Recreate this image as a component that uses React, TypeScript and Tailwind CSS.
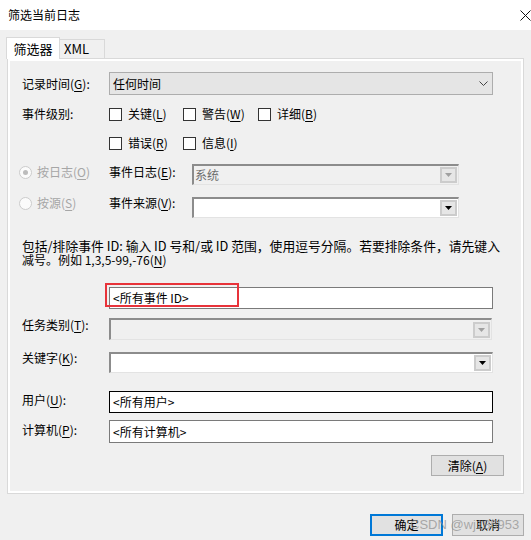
import React from 'react';

const font = { fontFamily: '"Noto Sans CJK SC", "Noto Sans", sans-serif' };

function Key({ children }: { children: React.ReactNode }) {
  return <span className="underline decoration-1 underline-offset-[2px]">{children}</span>;
}

function Checkbox({ label, k }: { label: string; k: string }) {
  return (
    <div className="flex items-center gap-[6px]">
      <span className="w-[13px] h-[13px] border border-[#333333] bg-white" />
      <span>
        {label}(<Key>{k}</Key>)
      </span>
    </div>
  );
}

function Radio({ label, k, checked }: { label: string; k: string; checked?: boolean }) {
  return (
    <div className="flex items-center gap-[5px] w-[99px] pl-[9px] leading-[16px] text-[#a6a6a6]">
      <span className="w-[13px] h-[13px] rounded-full border border-[#cccccc] bg-[#fbfbfb] flex items-center justify-center">
        {checked && <span className="w-[5px] h-[5px] rounded-full bg-[#bcbcbc]" />}
      </span>
      <span>
        {label}(<Key>{k}</Key>)
      </span>
    </div>
  );
}

function Arrow({ disabled }: { disabled?: boolean }) {
  return (
    <svg width="7" height="4" viewBox="0 0 7 4">
      <path d="M0 0 H7 L3.5 4 Z" fill={disabled ? '#a0a0a0' : '#000000'} />
    </svg>
  );
}

function ClassicCombo({ width, text, disabled }: { width: string; text?: string; disabled?: boolean }) {
  return (
    <div
      className={`${width} h-[21px] border-t-2 border-l-2 border-t-[#8c8c8c] border-l-[#8c8c8c] border-r border-b border-r-[#e3e3e3] border-b-[#e3e3e3] flex items-center ${
        disabled ? 'bg-[#f0f0f0]' : 'bg-white'
      }`}
    >
      <span className="flex-1 pl-[1px] text-[#6d6d6d] leading-[16px]">{text}</span>
      <div className="w-[17px] h-[16px] mr-[1px] border-2 border-[#cccccc] bg-[#e6e6e6] flex items-center justify-center">
        <Arrow disabled={disabled} />
      </div>
    </div>
  );
}

function TextBox({ text, dark }: { text: string; dark?: boolean }) {
  return (
    <div
      className={`w-[384px] h-full bg-white border flex items-center pl-[3px] ${
        dark ? 'border-black' : 'border-[#7a7a7a]'
      }`}
    >
      {text}
    </div>
  );
}

export default function App() {
  return (
    <div className="relative w-[531px] h-[540px] overflow-hidden bg-[#f0f0f0] text-[12px] text-black" style={font}>
      {/* title bar */}
      <div className="h-[30px] bg-white flex items-center justify-between pl-[8px]">
        <span>筛选当前日志</span>
        <svg width="11" height="11" viewBox="0 0 11 11" className="mt-[1px]">
          <path d="M0.5 0.5 L10.5 10.5 M10.5 0.5 L0.5 10.5" stroke="#111" strokeWidth="1" />
        </svg>
      </div>

      {/* tabs */}
      <div className="relative z-10 h-[28px] flex items-end pl-[6px] text-[13px]">
        <div className="w-[54px] h-[22px] -mb-px bg-white border border-b-0 border-[#d9d9d9] flex items-center justify-center">
          筛选器
        </div>
        <div className="w-[45px] h-[19px] bg-[#f0f0f0] border-t border-r border-[#d9d9d9] flex items-center pl-[4px]">
          XML
        </div>
      </div>

      {/* pane */}
      <div className="ml-[7px] w-[517px] h-[436px] border border-[#d9d9d9] bg-white p-[2px]">
        <div className="h-full bg-[#f0f0f0] flex flex-col">
          <div className="mt-[11px] h-[23px] flex items-center">
            <div className="w-[99px] pl-[12px]">
              记录时间(<Key>G</Key>):
            </div>
            <div className="w-[384px] h-full bg-[#e5e5e5] border border-[#adadad] flex items-center justify-between pl-[3px] pr-[4px]">
              <span>任何时间</span>
              <svg width="9" height="5" viewBox="0 0 9 5">
                <path d="M0.5 0.5 L4.5 4.5 L8.5 0.5" fill="none" stroke="#444" strokeWidth="1" />
              </svg>
            </div>
          </div>

          <div className="mt-[9px] h-[20px] flex items-center">
            <div className="w-[99px] pl-[12px]">事件级别:</div>
            <div className="w-[74px]">
              <Checkbox label="关键" k="L" />
            </div>
            <div className="w-[75px]">
              <Checkbox label="警告" k="W" />
            </div>
            <Checkbox label="详细" k="B" />
          </div>

          <div className="mt-[9px] h-[20px] flex items-center">
            <div className="w-[99px]" />
            <div className="w-[74px]">
              <Checkbox label="错误" k="R" />
            </div>
            <Checkbox label="信息" k="I" />
          </div>

          <div className="mt-[11px] h-[21px] flex items-start">
            <Radio label="按日志" k="O" checked />
            <div className="w-[83px] leading-[16px]">
              事件日志(<Key>E</Key>):
            </div>
            <ClassicCombo width="w-[267px]" text="系统" disabled />
          </div>

          <div className="mt-[12px] h-[21px] flex items-start">
            <div className="-mt-[2px]">
              <Radio label="按源" k="S" />
            </div>
            <div className="w-[83px] leading-[12px]">
              事件来源(<Key>V</Key>):
            </div>
            <ClassicCombo width="w-[267px]" />
          </div>

          <div className="mt-[21px] pl-[12px] leading-[14px] whitespace-nowrap">
            <div className="text-[12.8px]">包括/排除事件 ID: 输入 ID 号和/或 ID 范围，使用逗号分隔。若要排除条件，请先键入</div>
            <div>
              减号。例如 1,3,5-99,-76(<Key>N</Key>)
            </div>
          </div>

          <div className="mt-[20px] h-[22px] flex">
            <div className="w-[99px]" />
            <div className="relative">
              <div className="w-[384px] h-[22px] bg-white border border-[#7a7a7a] flex items-center pl-[3px]">
                &lt;所有事件 ID&gt;
              </div>
              <div className="absolute -left-[4px] -top-[4px] w-[134px] h-[24px] border-2 border-[#e8333a]" />
            </div>
          </div>

          <div className="mt-[9px] h-[22px] flex items-start">
            <div className="w-[99px] pl-[12px] leading-[14px]">
              任务类别(<Key>T</Key>):
            </div>
            <ClassicCombo width="w-[383px] h-[22px]" disabled />
          </div>

          <div className="mt-[12px] h-[21px] flex items-start">
            <div className="w-[99px] pl-[12px] leading-[12px]">
              关键字(<Key>K</Key>):
            </div>
            <ClassicCombo width="w-[384px]" />
          </div>

          <div className="mt-[18px] h-[22px] flex items-start">
            <div className="w-[99px] pl-[12px] leading-[18px]">
              用户(<Key>U</Key>):
            </div>
            <TextBox text="<所有用户>" dark />
          </div>

          <div className="mt-[7px] h-[23px] flex items-start">
            <div className="w-[99px] pl-[12px] leading-[20px]">
              计算机(<Key>P</Key>):
            </div>
            <TextBox text="<所有计算机>" />
          </div>

          <div className="mt-[12px] self-end mr-[17px] w-[73px] h-[21px] bg-[#e1e1e1] border border-[#adadad] flex items-center justify-center">
            清除(<Key>A</Key>)
          </div>
        </div>
      </div>

      {/* dialog buttons */}
      <div className="mt-[20px] flex justify-end gap-[9px] pr-[7px]">
        <div className="w-[73px] h-[22px] bg-[#e1e1e1] border-2 border-[#0078d7] flex items-center justify-center">
          确定
        </div>
        <div className="w-[72px] h-[22px] bg-[#e1e1e1] border border-[#adadad] flex items-center justify-center">
          取消
        </div>
      </div>

      {/* watermark */}
      <div
        className="absolute left-[410px] top-[515px] text-[13px] text-[#8c8c8c]/70 whitespace-nowrap"
        style={{ fontFamily: '"Liberation Sans", sans-serif' }}
      >
        CSDN @wj186953
      </div>
    </div>
  );
}
